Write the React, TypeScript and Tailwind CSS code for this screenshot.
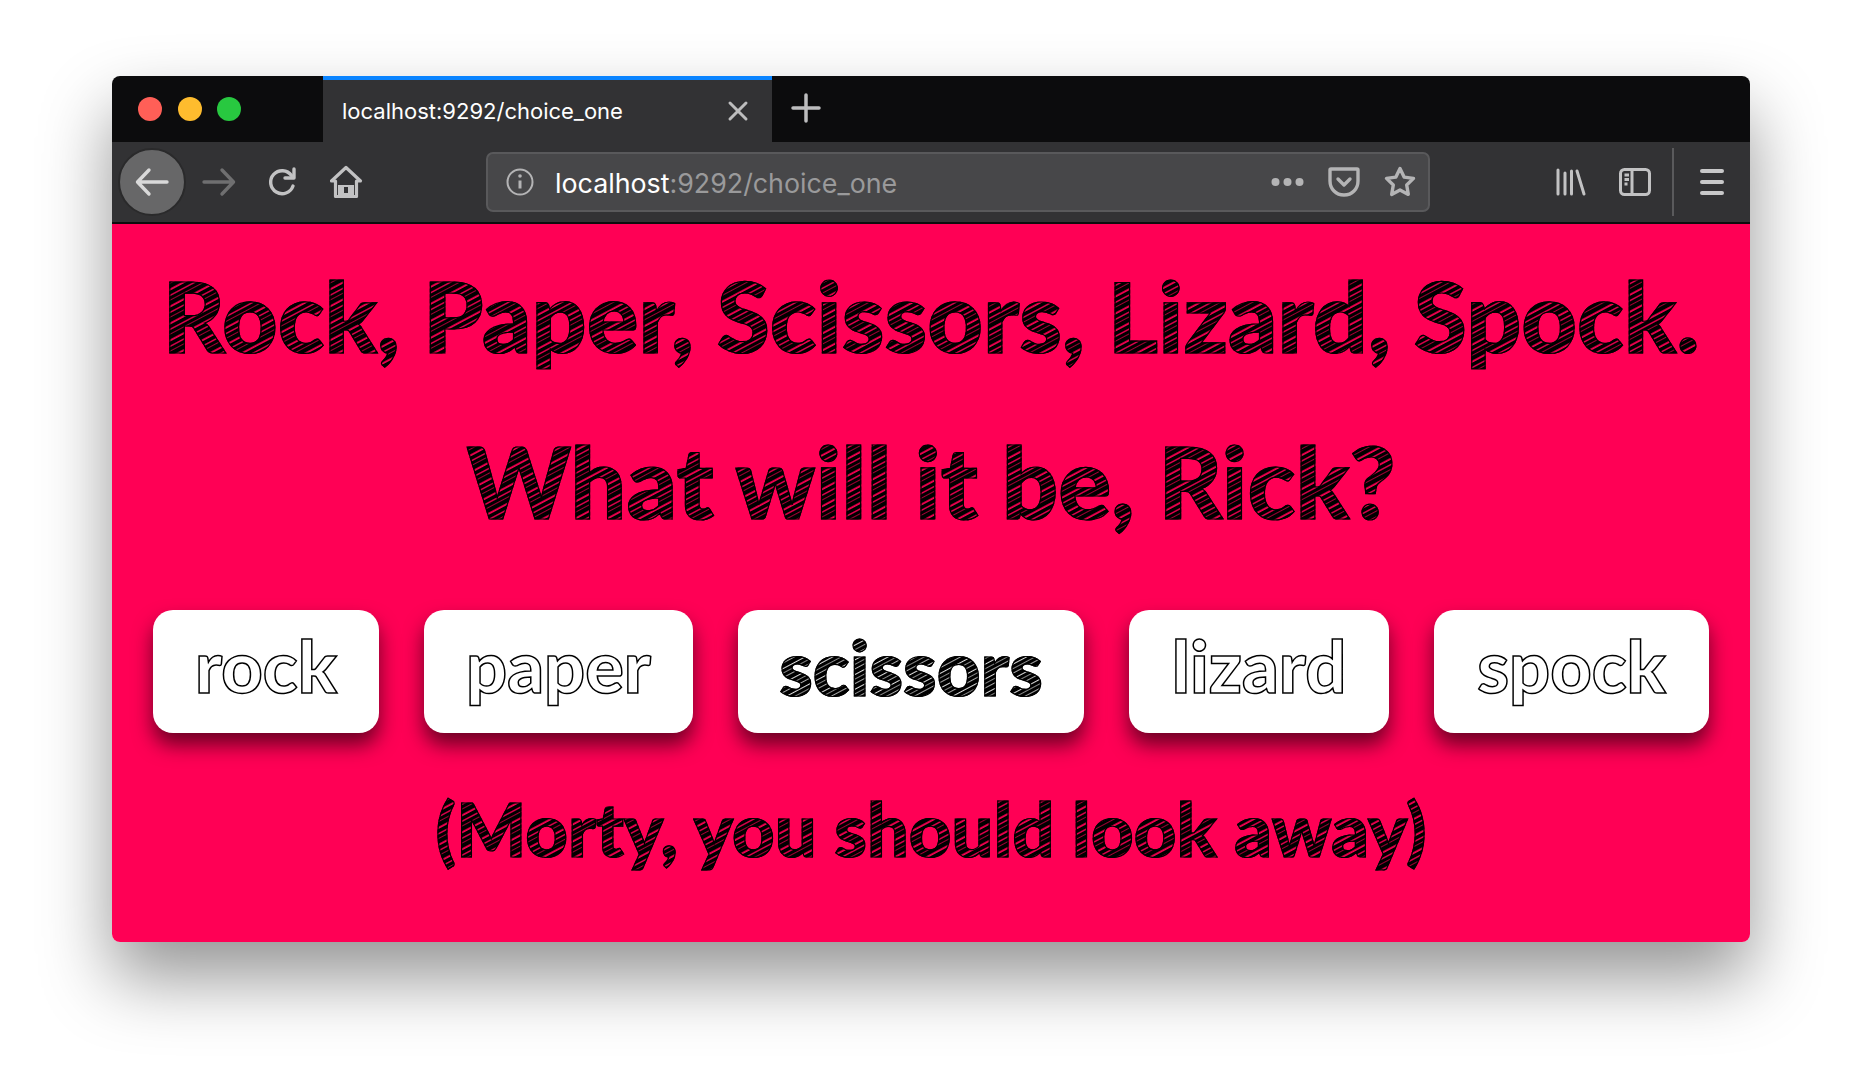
const sketchFont = "[font-family:Lato,'Open_Sans',sans-serif]";

const hatched =
  'bg-[repeating-linear-gradient(-28deg,#000_0px,#000_2px,#d8004a_3px,#d8004a_3.500px,#000_4.500px,#000_7px,#ff0055_8px,#c4003f_9px,#000_10px,#000_13px,#a00035_14px,#000_15px)] bg-clip-text text-transparent [-webkit-text-stroke:1.2px_#000]';

const choices = [
  { label: 'rock', width: 'w-[226px]' },
  { label: 'paper', width: 'w-[269px]' },
  { label: 'scissors', width: 'w-[346px]', active: true },
  { label: 'lizard', width: 'w-[260px]' },
  { label: 'spock', width: 'w-[275px]' },
];

const TrafficLights = () => (
  <div className="flex w-[211px] shrink-0 items-center gap-[15.5px] pl-[26px]">
    <span className="h-[24px] w-[24px] rounded-full bg-[#ff5f57]" />
    <span className="h-[24px] w-[24px] rounded-full bg-[#febc2e]" />
    <span className="h-[24px] w-[24px] rounded-full bg-[#28c840]" />
  </div>
);

const Tab = () => (
  <div className="flex h-full w-[449px] shrink-0 items-center justify-between border-t-4 border-[#0a84ff] bg-[#323234] pl-[19px] pr-[23px]">
    <span className="text-[22px] text-white">localhost:9292/choice_one</span>
    <svg width="22" height="22" viewBox="0 0 22 22" stroke="#bdbdbe" strokeWidth="3" strokeLinecap="round">
      <path d="M3 3l16 16M19 3L3 19" />
    </svg>
  </div>
);

const Arrow = ({ back, color }: { back?: boolean; color: string }) => (
  <svg width="34" height="30" viewBox="0 0 34 30" fill="none" stroke={color} strokeWidth="3.4" strokeLinecap="round" strokeLinejoin="round">
    {back ? <path d="M32 15H3M14 3L2.500 15 14 27" /> : <path d="M2 15h29M20 3l11.500 12L20 27" />}
  </svg>
);

const UrlBar = () => (
  <div className="ml-[108px] flex h-[60px] w-[944px] shrink-0 items-center rounded-[7px] border-2 border-[#59595b] bg-[#474749] pl-[18px] pr-[12px]">
    <svg width="28" height="28" viewBox="0 0 28 28" fill="none" stroke="#b4b4b5" strokeWidth="2">
      <circle cx="14" cy="14" r="12.500" />
      <path d="M14 12.500v8" strokeWidth="3" />
      <circle cx="14" cy="8" r="1.800" fill="#b4b4b5" stroke="none" />
    </svg>
    <span className="ml-[21px] pt-[2px] text-[26.8px] text-white">
      localhost<span className="text-[#9a9a9b]">:9292/choice_one</span>
    </span>
    <svg className="ml-auto" width="33" height="10" viewBox="0 0 33 10" fill="#b4b4b5">
      <circle cx="4.500" cy="5" r="4" />
      <circle cx="16.500" cy="5" r="4" />
      <circle cx="28.500" cy="5" r="4" />
    </svg>
    <svg className="ml-[24px]" width="32" height="30" viewBox="0 0 32 30" fill="none" stroke="#b4b4b5" strokeWidth="3.400" strokeLinejoin="round" strokeLinecap="round">
      <path d="M3 2h26a1 1 0 0 1 1 1v11c0 8-6 14-14 14S2 22 2 14V3a1 1 0 0 1 1-1z" />
      <path d="M10 12l6 6 6-6" />
    </svg>
    <svg className="ml-[24px]" width="32" height="32" viewBox="0 0 32 32" fill="none" stroke="#b4b4b5" strokeWidth="3.400" strokeLinejoin="round">
      <path d="M16 2.500l4.100 8.600 9.400 1.300-6.800 6.600 1.600 9.400L16 24l-8.300 4.400 1.600-9.400-6.800-6.600 9.400-1.300z" />
    </svg>
  </div>
);

const Toolbar = () => (
  <div className="flex h-[82px] items-center border-b-2 border-[#0c0c0d] bg-[#323234] pl-[6px]">
    <div className="flex h-[68px] w-[68px] shrink-0 items-center justify-center rounded-full border-2 border-[#2a2a2b] bg-[#676768]">
      <Arrow back color="#d9d9d9" />
    </div>
    <div className="flex w-[66px] shrink-0 justify-center">
      <Arrow color="#6f6f70" />
    </div>
    <div className="flex w-[62px] shrink-0 justify-center">
      <svg width="32" height="32" viewBox="0 0 32 32" fill="none" stroke="#c2c2c3" strokeWidth="3.4" strokeLinecap="round">
        <path d="M26 20a11.500 11.500 0 1 1-1.500-10.500" />
        <path d="M27 3v9h-9" strokeLinejoin="round" />
      </svg>
    </div>
    <div className="flex w-[64px] shrink-0 justify-center">
      <svg width="34" height="34" viewBox="0 0 34 34" fill="none" stroke="#c2c2c3" strokeWidth="3.2" strokeLinejoin="round">
        <path d="M2.500 16L17 2.500 31.500 16h-4v15.500h-21V16z" />
        <path d="M9 31.500h16V20H9z" fill="#c2c2c3" stroke="none" />
        <rect x="15" y="22" width="4" height="6" fill="#323234" stroke="none" />
      </svg>
    </div>
    <UrlBar />
    <div className="ml-[74px] flex w-[84px] shrink-0 justify-end pr-[2px]">
      <svg width="30" height="28" viewBox="0 0 30 28" fill="none" stroke="#c2c2c3" strokeWidth="3" strokeLinecap="round">
        <path d="M2 2v24M9 5v21M15.500 3v23M21 3l7 23" />
      </svg>
    </div>
    <div className="flex w-[63px] shrink-0 justify-end">
      <svg width="32" height="28" viewBox="0 0 32 28" fill="none" stroke="#c2c2c3" strokeWidth="3">
        <rect x="1.500" y="1.500" width="29" height="25" rx="4" />
        <path d="M13 2v24M5.500 7h4.500M5.500 11.500h4.500M5.500 16h3" />
      </svg>
    </div>
    <div className="ml-[21px] h-[68px] w-[2px] shrink-0 bg-[#5a5a5c]" />
    <div className="ml-[26px] flex flex-col gap-[7px]">
      <span className="h-[4px] w-[24px] rounded-full bg-[#c8c8c9]" />
      <span className="h-[4px] w-[24px] rounded-full bg-[#c8c8c9]" />
      <span className="h-[4px] w-[24px] rounded-full bg-[#c8c8c9]" />
    </div>
  </div>
);

const App = () => {
  return (
    <div className="flex h-[1090px] w-full justify-center overflow-hidden bg-white pt-[76px]">
      <div className="flex h-[866px] w-[1638px] flex-col overflow-hidden rounded-[8px] shadow-[0_36px_70px_rgba(0,0,0,0.42)] [font-family:Inter,sans-serif]">
        <div className="flex h-[66px] shrink-0 items-center bg-[#0c0c0d]">
          <TrafficLights />
          <Tab />
          <svg className="-mt-[2px] ml-[19px]" width="30" height="30" viewBox="0 0 30 30" stroke="#bdbdbe" strokeWidth="3.500" strokeLinecap="round">
            <path d="M15 2v26M2 15h26" />
          </svg>
        </div>
        <Toolbar />
        <main className={`flex flex-1 flex-col items-center bg-[#ff0055] ${sketchFont} font-black`}>
          <h1 className={`mt-[39px] text-[96.6px] leading-[106px] ${hatched}`}>Rock, Paper, Scissors, Lizard, Spock.</h1>
          <h1 className={`mt-[59px] text-[99px] leading-[106px] ${hatched}`}>What will it be, Rick?</h1>
          <div className="mt-[76px] flex gap-[45px]">
            {choices.map((choice) => (
              <button
                key={choice.label}
                className={`flex h-[123px] ${choice.width} items-center justify-center rounded-[20px] bg-white leading-none shadow-[0_12px_20px_rgba(60,0,20,0.75)] ${
                  choice.active ? 'text-[76px]' : 'text-[72px]'
                }`}
              >
                {choice.active ? (
                  <span className="bg-[repeating-linear-gradient(-28deg,#000_0px,#000_2px,#888_3px,#000_4px,#000_6px,#ddd_7px,#000_8px,#000_11px,#aaa_12px,#000_13px)] bg-clip-text pb-[10px] text-transparent [-webkit-text-stroke:1.2px_#000]">
                    {choice.label}
                  </span>
                ) : (
                  <span className="pb-[13px] text-white [-webkit-text-stroke:1.5px_#000]">{choice.label}</span>
                )}
              </button>
            ))}
          </div>
          <p className={`mt-[52px] text-[74px] leading-[88px] ${hatched}`}>(Morty, you should look away)</p>
        </main>
      </div>
    </div>
  );
};

export default App;
